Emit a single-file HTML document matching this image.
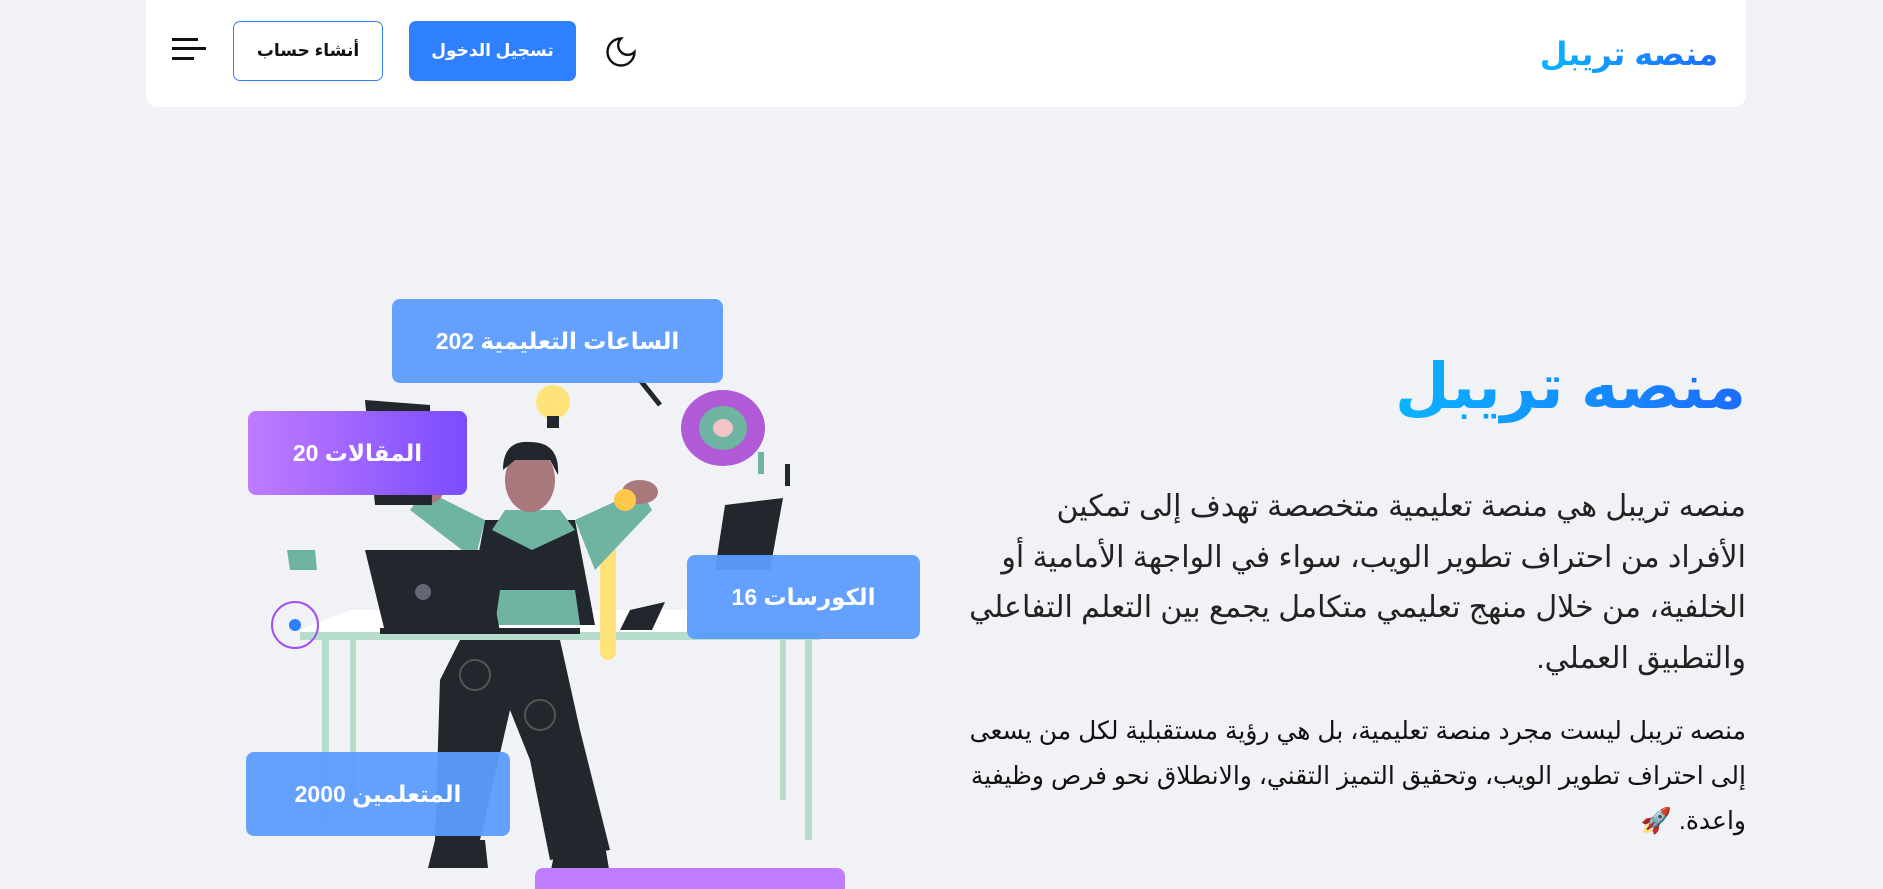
<!DOCTYPE html>
<html dir="rtl" lang="ar"><head><meta charset="utf-8">
<style>
*{margin:0;padding:0;box-sizing:border-box}
html,body{width:1883px;height:889px;overflow:hidden}
body{background:#f1f2f6;font-family:"Liberation Sans","Noto Sans CJK SC","DejaVu Sans",sans-serif;position:relative}
.nav{position:absolute;left:146px;top:-10px;width:1600px;height:117px;background:#fff;border-radius:12px}
.logo{position:absolute;right:28px;top:45px;font-size:32px;font-weight:bold;background:linear-gradient(90deg,#0ab4ff,#1d6cff);-webkit-background-clip:text;background-clip:text;color:transparent}
.btn{position:absolute;top:31px;height:60px;border-radius:7px;font-size:17px;font-weight:bold;display:flex;align-items:center;justify-content:center}
.login{left:263px;width:167px;background:#2f80ff;color:#fff}
.reg{left:87px;width:150px;background:#fff;border:1px solid #2f80ff;color:#111}
.title{position:absolute;right:137px;top:332px;font-size:63px;font-weight:bold;background:linear-gradient(90deg,#0ab4ff,#1d6cff);-webkit-background-clip:text;background-clip:text;color:transparent;line-height:110px}
.p1{position:absolute;right:137px;top:482px;font-size:30px;line-height:50.5px;color:#222;white-space:nowrap}
.p2{position:absolute;right:137px;top:709px;font-size:25px;line-height:45px;color:#111;white-space:nowrap}
.card{position:absolute;border-radius:8px;color:#fff;font-weight:bold;font-size:23px;display:flex;align-items:center;justify-content:center}
.blue{background:rgba(92,156,255,.95)}
.purp{background:linear-gradient(90deg,#c07cff,#7a4cff)}
</style></head><body>
<div class="nav">
 <div class="logo">منصه تريبل</div>
 <div class="btn login">تسجيل الدخول</div>
 <div class="btn reg">أنشاء حساب</div>
 <svg style="position:absolute;left:457px;top:44px" width="36" height="36" viewBox="0 0 24 24"><path d="M12 3a6 6 0 0 0 9 9 9 9 0 1 1-9-9z" fill="none" stroke="#111" stroke-width="1.6"/></svg>
 <svg style="position:absolute;left:26px;top:48px" width="36" height="26"><rect x="0" y="0" width="26" height="3" fill="#111"/><rect x="0" y="9" width="34" height="3" fill="#111"/><rect x="0" y="19" width="22" height="3" fill="#111"/></svg>
</div>

<svg style="position:absolute;left:260px;top:380px" width="600" height="509" viewBox="0 0 600 509">
 <polygon points="40,250 90,230 560,230 560,258 40,258" fill="#fff"/>
 <rect x="40" y="252" width="520" height="8" fill="#b6dccb"/>
 <rect x="62" y="260" width="7" height="190" fill="#b6dccb"/><rect x="90" y="260" width="6" height="170" fill="#b6dccb"/>
 <rect x="520" y="260" width="6" height="160" fill="#b6dccb"/><rect x="545" y="260" width="7" height="200" fill="#b6dccb"/>
 <rect x="340" y="140" width="16" height="140" rx="8" fill="#ffe37a"/>
 <path d="M200,260 L300,260 L320,350 L350,470 L290,480 L270,380 L250,330 L220,460 L175,460 L180,300 Z" fill="#22262d"/>
 <circle cx="215" cy="295" r="15" fill="none" stroke="#555" stroke-width="2"/><circle cx="280" cy="335" r="15" fill="none" stroke="#555" stroke-width="2"/>
 <path d="M175,460 L225,460 L228,488 L168,488Z" fill="#22262d"/><path d="M295,470 L345,465 L350,495 L290,495Z" fill="#22262d"/>
 <path d="M225,140 L315,140 L335,245 L205,245 Z" fill="#22262d"/>
 <path d="M245,130 L300,130 L315,150 L272,170 L232,150Z" fill="#6fb3a3"/>
 <path d="M240,210 L315,210 L320,245 L235,245Z" fill="#6fb3a3"/>
 <path d="M225,140 L165,110 L150,130 L215,180Z" fill="#6fb3a3"/><path d="M315,140 L380,110 L392,130 L335,190Z" fill="#6fb3a3"/>
 <ellipse cx="270" cy="100" rx="25" ry="32" fill="#a8787c"/>
 <path d="M243,90 Q243,60 270,62 Q300,62 298,95 L290,80 L255,80Z" fill="#22262d"/>
 <ellipse cx="165" cy="112" rx="18" ry="12" fill="#a8787c"/><ellipse cx="380" cy="112" rx="18" ry="12" fill="#a8787c"/>
 <path d="M105,170 L225,170 L240,252 L125,252Z" fill="#22262d"/>
 <rect x="120" y="248" width="200" height="6" fill="#22262d"/>
 <circle cx="163" cy="212" r="8" fill="#667"/>
 <path d="M465,125 L523,118 L510,190 L455,190Z" fill="#22262d"/>
 <path d="M370,230 L405,222 L392,250 L360,250Z" fill="#22262d"/>
 <circle cx="293" cy="22" r="17" fill="#ffe37a"/><rect x="287" y="36" width="12" height="12" fill="#22262d"/>
 <ellipse cx="463" cy="48" rx="42" ry="38" fill="#b05ad8"/><ellipse cx="463" cy="48" rx="24" ry="22" fill="#6fb3a3"/><ellipse cx="463" cy="48" rx="10" ry="9" fill="#f2c4c6"/>
 <path d="M380,0 L400,25" stroke="#22262d" stroke-width="5"/>
 <circle cx="365" cy="120" r="11" fill="#ffc84a"/>
 <path d="M27,170 L55,170 L57,190 L30,190Z" fill="#6fb3a3"/>
 <rect x="498" y="72" width="6" height="22" fill="#6fb3a3"/><rect x="525" y="84" width="5" height="22" fill="#22262d"/>
 <path d="M105,20 L170,25 L172,125 L115,125Z" fill="#22262d"/>
</svg>
<svg style="position:absolute;left:270px;top:600px" width="50" height="50"><circle cx="25" cy="25" r="23" fill="none" stroke="#a04ef5" stroke-width="2"/><circle cx="25" cy="25" r="6" fill="#2f80ff"/></svg>

<div class="card blue" style="left:392px;top:299px;width:331px;height:84px">الساعات التعليمية 202</div>
<div class="card purp" style="left:248px;top:411px;width:219px;height:84px">المقالات 20</div>
<div class="card blue" style="left:687px;top:555px;width:233px;height:84px">الكورسات 16</div>
<div class="card blue" style="left:246px;top:752px;width:264px;height:84px">المتعلمين 2000</div>
<div class="card" style="left:535px;top:868px;width:310px;height:60px;background:#c07cff"></div>

<div class="title">منصه تريبل</div>
<div class="p1">منصه تريبل هي منصة تعليمية متخصصة تهدف إلى تمكين<br>الأفراد من احتراف تطوير الويب، سواء في الواجهة الأمامية أو<br>الخلفية، من خلال منهج تعليمي متكامل يجمع بين التعلم التفاعلي<br>والتطبيق العملي.</div>
<div class="p2">منصه تريبل ليست مجرد منصة تعليمية، بل هي رؤية مستقبلية لكل من يسعى<br>إلى احتراف تطوير الويب، وتحقيق التميز التقني، والانطلاق نحو فرص وظيفية<br>واعدة. 🚀</div>
</body></html>
